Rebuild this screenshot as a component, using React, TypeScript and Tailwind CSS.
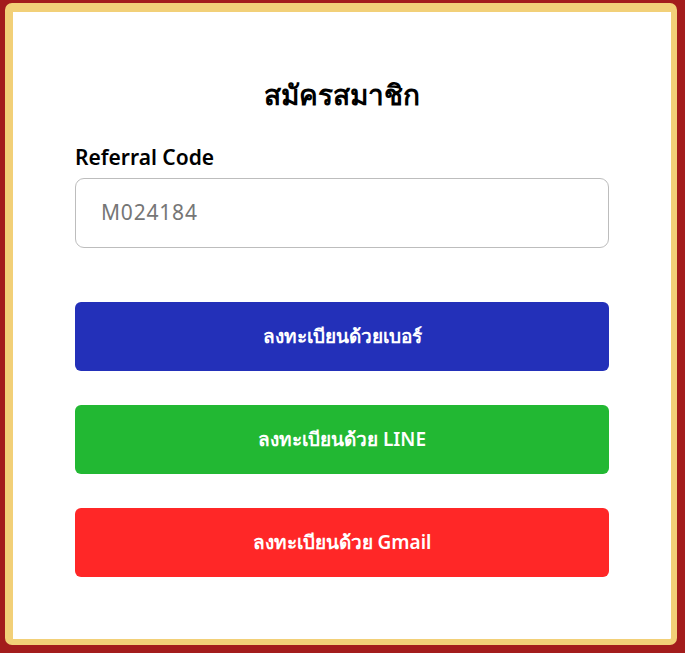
import { type FC } from 'react';

const buttons = [
  { label: 'ลงทะเบียนด้วยเบอร์', className: 'bg-[#2330b9]' },
  { label: 'ลงทะเบียนด้วย LINE', className: 'bg-[#22b833]' },
  { label: 'ลงทะเบียนด้วย Gmail', className: 'bg-[#ff2727]' }
];

const App: FC = () => {
  return (
    <div className="min-h-[653px] w-[685px] bg-[#a31c1c] pl-[5px] pt-[3px] pr-[8px] pb-[8px] font-['Noto_Sans',sans-serif]">
      <div className="h-[642px] rounded-[7px] border-t-[9px] border-l-[8px] border-r-[6px] border-b-[6px] border-[#f2d078] bg-white px-[62px] pt-[64px]">
        <h1 className="text-center text-[28px] font-semibold leading-[36px] text-black">สมัครสมาชิก</h1>
        <label className="mt-[31px] block text-[21px] font-semibold leading-[28px] text-black">Referral Code</label>
        <div className="mt-[7px] flex h-[70px] items-center rounded-[9px] border border-[#bdbdbd] px-[25px] text-[21px] tracking-[0.8px] text-[#767676]">
          M024184
        </div>
        <div className="mt-[54px] flex flex-col gap-[34px]">
          {buttons.map((b) => (
            <button
              key={b.label}
              className={`flex h-[69px] items-center justify-center rounded-[6px] text-[19px] font-semibold text-white ${b.className}`}
            >
              {b.label}
            </button>
          ))}
        </div>
      </div>
    </div>
  );
};

export default App;
